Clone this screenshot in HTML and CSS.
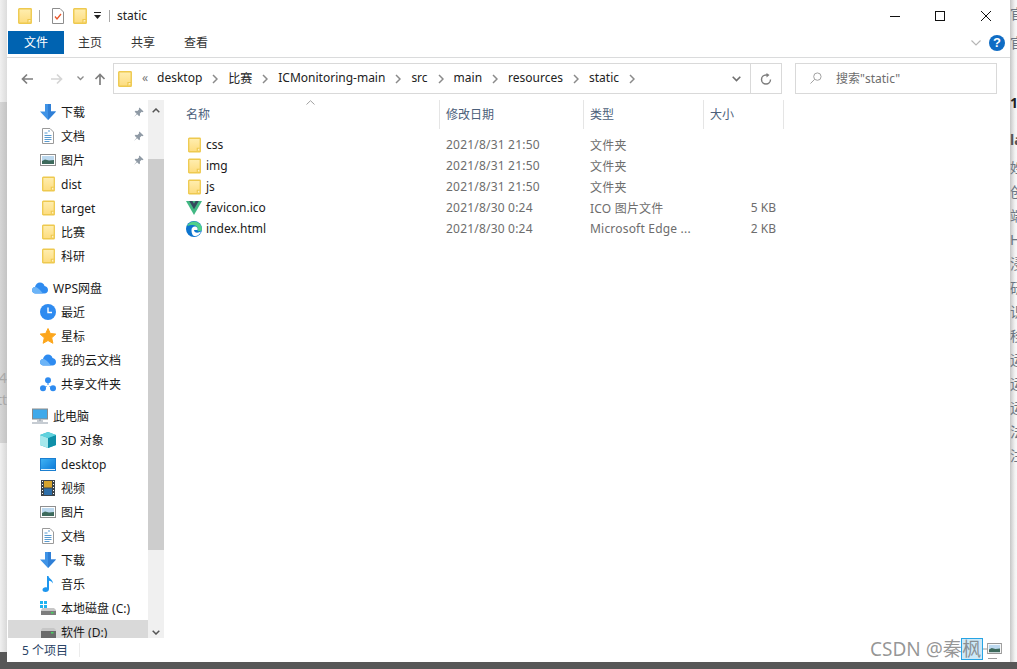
FILE: index.html
```html
<!DOCTYPE html>
<html lang="zh-CN">
<head>
<meta charset="utf-8">
<title>static</title>
<link rel="stylesheet" href="styles.css">
</head>
<body>
<svg class="defs" aria-hidden="true">
  <defs>
    <linearGradient id="gf" x1="0" y1="0" x2="0" y2="1"><stop offset="0" stop-color="#ffeeb0"/><stop offset="1" stop-color="#fddc7e"/></linearGradient>
    <linearGradient id="gvid" x1="0" y1="0" x2="1" y2="1"><stop offset="0" stop-color="#3fb4f5"/><stop offset="1" stop-color="#0a78d7"/></linearGradient>
    <symbol id="folder" viewBox="0 0 14 16"><rect x=".75" y=".75" width="12.5" height="14.5" rx=".6" fill="url(#gf)" stroke="#eec94f" stroke-width="1.4"/><path d="M10 15v-3.5h3" fill="#fff3c8" stroke="#eec94f" stroke-width="1.2"/></symbol>
    <symbol id="down" viewBox="0 0 16 16"><path d="M5 0h6v7.500h5L8 16 0 7.500h5z" fill="#3f93e6"/><path d="M8 0h3v7.500h5L8 16z" fill="#2f7fd6"/></symbol>
    <symbol id="doc" viewBox="0 0 12 16"><path d="M.5.500h7.500l3.500 3.500v11.500H.5z" fill="#fff" stroke="#9a9a9a"/><path d="M2.500 5h3M6 3h2M2.500 7.500h7M2.500 9.500h7M2.500 11.500h7M2.500 13.500h5" stroke="#5a9bd0" fill="none"/></symbol>
    <symbol id="pic" viewBox="0 0 16 12"><rect x=".5" y=".5" width="15" height="11" fill="#fff" stroke="#8f8f8f"/><rect x="2" y="2" width="12" height="8" fill="#bcd8ee"/><path d="M2 7l3-1.500 4 1 5-.5v4H2z" fill="#3d6a5c"/></symbol>
    <symbol id="pin" viewBox="0 0 12 12"><path d="M7 .5l4.500 4.500-1.200.6-.8-.5-2 2 .2 2-1 1-2.200-2.200L1 11l3-3.600L1.800 5.200l1-1 2 .2 2-2-.4-.8z" fill="#8f9aa5"/></symbol>
    <symbol id="cloud" viewBox="0 0 16 12"><path d="M3.500 11.500C1.500 11.500 0 10 0 8.200 0 6.500 1.300 5.200 3 5 3.600 2.500 5.500.5 8 .5c2.300 0 4 1.500 4.500 3.500C14.500 4.300 16 6 16 8c0 2-1.500 3.500-3.500 3.500z" fill="#2e8bf0"/><path d="M3.500 11.500C1.500 11.500 0 10 0 8.200 0 6.500 1.300 5.200 3 5c2 0 3.500 1.500 5 3l3 3.500z" fill="#6cb4f7"/></symbol>
    <symbol id="clock" viewBox="0 0 16 16"><circle cx="8" cy="8" r="8" fill="#2e8bf0"/><path d="M8 3.500V8.500h4" fill="none" stroke="#fff" stroke-width="1.400"/></symbol>
    <symbol id="star" viewBox="0 0 16 16"><path d="M8 .5l2.300 5 5.500.6-4.100 3.700 1.200 5.500L8 12.500l-4.900 2.800 1.200-5.500L.2 6.100l5.500-.6z" fill="#fca61c" stroke="#fca61c" stroke-linejoin="round"/></symbol>
    <symbol id="share" viewBox="0 0 16 16"><circle cx="8" cy="4.200" r="3" fill="#2e8bf0"/><circle cx="3" cy="12.300" r="3" fill="#2e8bf0"/><circle cx="13" cy="12.300" r="3" fill="#2e8bf0"/><path d="M8 6v3M6.500 10.500l-2 1M9.500 10.500l2 1" stroke="#2e8bf0" fill="none"/></symbol>
    <symbol id="pc" viewBox="0 0 16 15"><rect x=".5" y=".5" width="15" height="10" fill="#3fa9ea" stroke="#8b8b8b"/><path d="M5 12.500h6M8 10.500v2M0 14.500h16" stroke="#8d99a6" fill="none"/></symbol>
    <symbol id="cube" viewBox="0 0 16 16"><path d="M8 0l8 3v10l-8 3-8-3V3z" fill="#27b3c6"/><path d="M0 3l8 3v10l-8-3z" fill="#a6e8ec"/><path d="M8 6l8-3v10l-8 3z" fill="#0f8fa8"/><path d="M0 3l8-3 8 3-8 3z" fill="#5fd2dd"/></symbol>
    <symbol id="desk" viewBox="0 0 16 13"><rect x=".5" y=".5" width="15" height="12" fill="url(#gvid)" stroke="#1b7fd0"/><path d="M1 11.500h14" stroke="#dff1fd"/></symbol>
    <symbol id="film" viewBox="0 0 14 16"><rect width="14" height="16" fill="#3d4449"/><rect x="3" y="1" width="8" height="6.500" fill="#d6a42e"/><rect x="3" y="8.500" width="8" height="6.500" fill="#2e6ea8"/><path d="M1 1.500h1M1 4.500h1M1 7.500h1M1 10.500h1M1 13.500h1M12 1.500h1M12 4.500h1M12 7.500h1M12 10.500h1M12 13.500h1" stroke="#fff"/></symbol>
    <symbol id="music" viewBox="0 0 12 16"><path d="M5 0h1.500c.3 2.500 4.500 3.500 4.500 7.500-.8-1.600-2.500-2.500-4-2.700V13c0 1.800-1.500 3-3.500 3C1.800 16 .5 15 .5 13.700c0-1.400 1.500-2.500 3-2.500.6 0 1.100.1 1.500.3z" fill="#1e96ee"/></symbol>
    <symbol id="drive" viewBox="0 0 16 14"><path d="M0 0h3v3H0zM4 0h3v3H4zM0 4h3v3H0zM4 4h3v3H4z" fill="#1eb4f0"/><path d="M1 9l1.500-2H14l2 2v5H1z" fill="#c6c6c6"/><rect x="1" y="10" width="15" height="4" fill="#7d7d7d"/><rect x="11" y="11" width="2.500" height="1.500" fill="#46d160"/></symbol>
    <symbol id="drive2" viewBox="0 0 16 14"><path d="M1 5l1.500-2H14l2 2v9H1z" fill="#c6c6c6"/><rect x="1" y="6" width="15" height="8" fill="#6a6a6a"/><rect x="11" y="7" width="2.500" height="1.500" fill="#46d160"/></symbol>
    <symbol id="vue" viewBox="0 0 16 14"><path d="M0 0h16L8 14z" fill="#41b883"/><path d="M3.200 0h3.200L8 2.800 9.600 0h3.200L8 8.300z" fill="#34495e"/></symbol>
    <symbol id="edge" viewBox="0 0 16 16"><circle cx="8" cy="8" r="8" fill="#0c74cf"/><path d="M1 5C3 1 7 0 10 .7c4 1 6 4.300 6 7.800 0 1.500-2.500 2-4.500 1.500C13 7 10 4 7 4 4.500 4 2.500 4.500 1 5z" fill="#4fd08a"/><path d="M5.500 9c0-2.500 2-4 4-3.500 1.500.4 2.500 1.800 2 3.500H8c0 2 2 3 4.500 2.500l2.500-1c-1 3-4 5-6.500 4.500C6 14.500 5.500 11 5.500 9z" fill="#fff"/></symbol>
    <symbol id="chev" viewBox="0 0 6 10"><path d="M1 1l4 4-4 4" fill="none" stroke="#8a8a8a" stroke-width="1.500"/></symbol>
  </defs>
</svg>

<div class="screen">
  <div class="desk-row">
    <div class="strip-left">
      <div class="sl-top"></div>
      <div class="sl-mid"><span class="sl-a">e4</span><span class="sl-b">tt</span></div>
      <div class="sl-low"></div>
      <div class="sl-dark"></div>
    </div>

    <main class="window">
      <header class="titlebar">
        <svg class="qa-folder"><use href="#folder"/></svg>
        <span class="qa-sep"></span>
        <svg class="qa-check" viewBox="0 0 12 16"><path d="M.5.500h7.500l3.500 3.500v11.500H.5z" fill="#fff" stroke="#8d8d8d"/><path d="M3 8.500l2 2.500 4-5" fill="none" stroke="#e8562a" stroke-width="1.300"/></svg>
        <svg class="qa-folder2"><use href="#folder"/></svg>
        <svg class="qa-drop" viewBox="0 0 7 7"><path d="M0 0h7v1H0zM0 3h7L3.500 7z" fill="#222"/></svg>
        <span class="qa-sep2"></span>
        <span class="title-text">static</span>
        <div class="winctl">
          <svg viewBox="0 0 10 10" class="wc wc-min"><path d="M0 5.500h10" stroke="#111" fill="none"/></svg>
          <svg viewBox="0 0 10 10" class="wc wc-max"><rect x=".5" y=".5" width="9" height="9" fill="none" stroke="#111"/></svg>
          <svg viewBox="0 0 10 10" class="wc wc-close"><path d="M0 0l10 10M10 0L0 10" stroke="#111" fill="none"/></svg>
        </div>
      </header>

      <nav class="ribbon">
        <span class="tab tab-file">文件</span>
        <span class="tab tab-home">主页</span>
        <span class="tab tab-share">共享</span>
        <span class="tab tab-view">查看</span>
        <svg class="rb-chev" viewBox="0 0 10 6"><path d="M.5.500L5 5 9.500.5" fill="none" stroke="#b5b5b5" stroke-width="1.100"/></svg>
        <span class="help">?</span>
      </nav>

      <div class="navrow">
        <svg class="nv nv-back" viewBox="0 0 12 12"><path d="M12 6H1.500M6 1.500L1.500 6 6 10.500" fill="none" stroke="#7f7f7f" stroke-width="1.700"/></svg>
        <svg class="nv nv-fwd" viewBox="0 0 12 12"><path d="M0 6h10.500M6 1.500L10.500 6 6 10.500" fill="none" stroke="#d5d5d5" stroke-width="1.700"/></svg>
        <svg class="nv nv-drop" viewBox="0 0 7 5"><path d="M.5.500L3.500 3.500 6.500.5" fill="none" stroke="#8a8a8a" stroke-width="1.300"/></svg>
        <svg class="nv nv-up" viewBox="0 0 12 12"><path d="M6 12V1.500M1.500 6L6 1.500 10.500 6" fill="none" stroke="#7f7f7f" stroke-width="1.700"/></svg>
        <div class="addr">
          <svg class="ad-folder"><use href="#folder"/></svg>
          <span class="ad-more">«</span>
          <span class="crumb">desktop</span><svg class="cv"><use href="#chev"/></svg>
          <span class="crumb">比赛</span><svg class="cv"><use href="#chev"/></svg>
          <span class="crumb">ICMonitoring-main</span><svg class="cv"><use href="#chev"/></svg>
          <span class="crumb">src</span><svg class="cv"><use href="#chev"/></svg>
          <span class="crumb">main</span><svg class="cv"><use href="#chev"/></svg>
          <span class="crumb">resources</span><svg class="cv"><use href="#chev"/></svg>
          <span class="crumb">static</span><svg class="cv"><use href="#chev"/></svg>
          <span class="ad-fill"></span>
          <svg class="ad-drop" viewBox="0 0 9 6"><path d="M.7.700L4.500 4.500 8.300.7" fill="none" stroke="#6f6f6f" stroke-width="1.600"/></svg>
          <span class="ad-refresh">
            <svg viewBox="0 0 12 12" class="rf"><path d="M10.500 6.500A4.500 4.500 0 1 1 6 2h2" fill="none" stroke="#7c7c7c" stroke-width="1.400"/><path d="M6.500 0l3 2-3 2.500z" fill="#7c7c7c"/></svg>
          </span>
        </div>
        <div class="search">
          <svg class="sr" viewBox="0 0 13 13"><circle cx="8" cy="5" r="4" fill="none" stroke="#9a9a9a"/><path d="M5 8l-4.500 4.500" stroke="#9a9a9a" fill="none"/></svg>
          <span>搜索"static"</span>
        </div>
      </div>

      <div class="content">
        <aside class="pane">
          <div class="tree">
            <div class="it"><svg class="i i16"><use href="#down"/></svg><span>下载</span><svg class="pin"><use href="#pin"/></svg></div>
            <div class="it"><svg class="i i-doc"><use href="#doc"/></svg><span>文档</span><svg class="pin"><use href="#pin"/></svg></div>
            <div class="it"><svg class="i i-pic"><use href="#pic"/></svg><span>图片</span><svg class="pin"><use href="#pin"/></svg></div>
            <div class="it"><svg class="i i-folder"><use href="#folder"/></svg><span>dist</span></div>
            <div class="it"><svg class="i i-folder"><use href="#folder"/></svg><span>target</span></div>
            <div class="it"><svg class="i i-folder"><use href="#folder"/></svg><span>比赛</span></div>
            <div class="it"><svg class="i i-folder"><use href="#folder"/></svg><span>科研</span></div>
            <div class="it top"><svg class="i i-cloud"><use href="#cloud"/></svg><span>WPS网盘</span></div>
            <div class="it"><svg class="i i16"><use href="#clock"/></svg><span>最近</span></div>
            <div class="it"><svg class="i i16"><use href="#star"/></svg><span>星标</span></div>
            <div class="it"><svg class="i i-cloud"><use href="#cloud"/></svg><span>我的云文档</span></div>
            <div class="it"><svg class="i i16"><use href="#share"/></svg><span>共享文件夹</span></div>
            <div class="it top"><svg class="i i16"><use href="#pc"/></svg><span>此电脑</span></div>
            <div class="it"><svg class="i i16"><use href="#cube"/></svg><span>3D 对象</span></div>
            <div class="it"><svg class="i i-desk"><use href="#desk"/></svg><span>desktop</span></div>
            <div class="it"><svg class="i i-film"><use href="#film"/></svg><span>视频</span></div>
            <div class="it"><svg class="i i-pic"><use href="#pic"/></svg><span>图片</span></div>
            <div class="it"><svg class="i i-doc"><use href="#doc"/></svg><span>文档</span></div>
            <div class="it"><svg class="i i16"><use href="#down"/></svg><span>下载</span></div>
            <div class="it"><svg class="i i-music"><use href="#music"/></svg><span>音乐</span></div>
            <div class="it"><svg class="i i-drive"><use href="#drive"/></svg><span>本地磁盘 (C:)</span></div>
            <div class="it sel"><svg class="i i-drive"><use href="#drive2"/></svg><span>软件 (D:)</span></div>
          </div>
          <div class="vscroll">
            <div class="sb-up"><svg viewBox="0 0 8 5" class="sb-ar"><path d="M.7 4.300L4 1l3.300 3.300" fill="none" stroke="#555" stroke-width="1.500"/></svg></div>
            <div class="sb-thumb"></div>
            <div class="sb-down"><svg viewBox="0 0 8 5" class="sb-ar"><path d="M.7.700L4 4l3.300-3.300" fill="none" stroke="#555" stroke-width="1.500"/></svg></div>
          </div>
        </aside>

        <section class="list">
          <div class="thead">
            <div class="th th-name">名称<svg class="sort" viewBox="0 0 9 5"><path d="M.5 4.500L4.500.7l4 3.800" fill="none" stroke="#a0a0a0"/></svg></div>
            <div class="th">修改日期</div>
            <div class="th">类型</div>
            <div class="th">大小</div>
          </div>
          <div class="tr"><div class="td-name"><svg class="fi fi-f"><use href="#folder"/></svg><span>css</span></div><div class="td">2021/8/31 21:50</div><div class="td">文件夹</div><div class="td num"></div></div>
          <div class="tr"><div class="td-name"><svg class="fi fi-f"><use href="#folder"/></svg><span>img</span></div><div class="td">2021/8/31 21:50</div><div class="td">文件夹</div><div class="td num"></div></div>
          <div class="tr"><div class="td-name"><svg class="fi fi-f"><use href="#folder"/></svg><span>js</span></div><div class="td">2021/8/31 21:50</div><div class="td">文件夹</div><div class="td num"></div></div>
          <div class="tr"><div class="td-name"><svg class="fi"><use href="#vue"/></svg><span>favicon.ico</span></div><div class="td">2021/8/30 0:24</div><div class="td">ICO 图片文件</div><div class="td num">5 KB</div></div>
          <div class="tr"><div class="td-name"><svg class="fi"><use href="#edge"/></svg><span>index.html</span></div><div class="td">2021/8/30 0:24</div><div class="td">Microsoft Edge ...</div><div class="td num">2 KB</div></div>
        </section>
      </div>

      <footer class="status"><span class="st-text">5 个项目</span><span class="st-sep"></span></footer>
    </main>

    <div class="strip-right">
      <span class="sr-a">官</span><span class="sr-a sr-a2">官</span>
      <span class="sr-b">1:</span><span class="sr-b sr-b2">la</span>
      <span>姓</span><span>创</span><span>端</span><span>H</span><span>浸</span><span>研</span><span>识</span><span>移</span><span>运</span><span>运</span><span>运</span><span>法</span><span>注</span>
    </div>
  </div>
  <div class="taskbar"></div>

  <div class="watermark"><span>CSDN @秦</span><span class="wm-hi">枫</span>
    <svg class="wm-ic" viewBox="0 0 19 18"><path d="M0 6h4M5 15.500h9" stroke="#9a9a9a" fill="none"/><use href="#pic" x="4" y="0" width="15" height="11"/></svg>
  </div>
</div>
</body>
</html>
```

FILE: styles.css
```css
* { box-sizing: border-box; }
html, body { margin: 0; padding: 0; background: #fff; }
body { font-family: "Noto Sans", "Noto Sans CJK SC", sans-serif; font-size: 12px; color: #1a1a1a; overflow: hidden; }
svg { display: block; flex: none; }
.defs { position: absolute; width: 0; height: 0; }

.screen { position: relative; width: 1017px; height: 669px; display: flex; flex-direction: column; overflow: hidden; }
.desk-row { flex: 1; display: flex; min-height: 0; }
.taskbar { height: 7px; background: #575757; }

.strip-left { width: 7px; display: flex; flex-direction: column; overflow: hidden; }
.sl-top { height: 102px; background: linear-gradient(90deg, #f0f0f0, #dcdcdc); }
.sl-mid { height: 341px; background: linear-gradient(90deg, #d6d6d6, #c4c4c4); display: flex; flex-direction: column; align-items: flex-end; font-size: 14px; color: #a8a8a8; line-height: 22px; padding-top: 265px; white-space: nowrap; }
.sl-low { flex: 1; background: linear-gradient(90deg, #f0f0f0, #d8d8d8); }
.sl-dark { height: 10px; background: #575757; }

.window { flex: 1; min-width: 0; background: #fff; display: flex; flex-direction: column; }

.titlebar { height: 31px; display: flex; align-items: center; position: relative; }
.qa-folder { width: 14px; height: 16px; margin-left: 11px; }
.qa-sep { width: 1px; height: 12px; background: #a8a8a8; margin-left: 7px; }
.qa-check { width: 12px; height: 16px; margin-left: 12px; }
.qa-folder2 { width: 14px; height: 16px; margin-left: 9px; }
.qa-drop { width: 7px; height: 7px; margin-left: 7px; }
.qa-sep2 { width: 1px; height: 12px; background: #a8a8a8; margin-left: 8px; }
.title-text { margin-left: 7px; font-size: 12px; color: #222; }
.winctl { margin-left: auto; display: flex; align-items: center; padding-right: 19px; gap: 35px; }
.wc { width: 10px; height: 10px; }
.wc-close { margin-left: 1px; }

.ribbon { height: 23px; display: flex; align-items: center; margin-left: 1px; }
.tab { color: #333; line-height: 23px; }
.tab-file { width: 56px; height: 23px; background: #0063b1; color: #fff; text-align: center; }
.tab-home { margin-left: 14px; }
.tab-share { margin-left: 29px; }
.tab-view { margin-left: 29px; }
.rb-chev { width: 10px; height: 6px; margin-left: auto; margin-right: 8px; }
.help { width: 16px; height: 16px; border-radius: 50%; background: #0f6cc4; color: #fff; font: bold 13px/16px "Liberation Sans", sans-serif; text-align: center; margin-right: 5px; }

.navrow { margin-top: 3px; border-top: 1px solid #dadbdc; padding-top: 5px; height: 43px; display: flex; align-items: flex-start; }
.nv { margin-top: 10px; }
.nv-back { width: 12px; height: 12px; margin-left: 14px; }
.nv-fwd { width: 12px; height: 12px; margin-left: 18px; }
.nv-drop { width: 7px; height: 5px; margin-left: 14px; margin-top: 13px; }
.nv-up { width: 12px; height: 12px; margin-left: 10px; }
.addr { width: 669px; height: 31px; margin-left: 7px; border: 1px solid #d9d9d9; display: flex; align-items: center; padding-left: 4px; }
.ad-folder { width: 14px; height: 16px; }
.ad-more { margin-left: 10px; color: #777; width: 15px; margin-bottom: 2px; }
.crumb { color: #222; white-space: nowrap; margin-bottom: 2px; }
.cv { width: 6px; height: 10px; margin: 0 10px; }
.ad-fill { flex: 1; }
.ad-drop { width: 9px; height: 6px; margin-right: 9px; }
.ad-refresh { width: 31px; height: 29px; border-left: 1px solid #d9d9d9; display: flex; align-items: center; justify-content: center; }
.rf { width: 12px; height: 12px; }
.search { width: 202px; height: 31px; margin-left: 13px; border: 1px solid #d9d9d9; display: flex; align-items: center; padding: 0 0 2px 14px; color: #6d6d6d; gap: 14px; }
.sr { width: 12px; height: 12px; }

.content { flex: 1; min-height: 0; display: flex; }
.pane { width: 156px; margin-left: 1px; display: flex; overflow: hidden; }
.tree { width: 140px; overflow: hidden; }
.it { height: 24px; display: flex; align-items: center; padding-left: 32px; position: relative; white-space: nowrap; color: #1a1a1a; }
.it > span { position: absolute; left: 53px; }
.it.top { margin-top: 8px; padding-left: 24px; }
.it.top > span { left: 45px; }
.it.sel { background: #d9d9d9; }
.i { width: 16px; height: 16px; }
.i-doc { width: 12px; height: 16px; margin-left: 2px; }
.i-pic { width: 16px; height: 12px; }
.i-folder { width: 13px; height: 16px; margin-left: 2px; }
.i-cloud { width: 16px; height: 12px; }
.i-desk { width: 16px; height: 13px; }
.i-film { width: 14px; height: 16px; margin-left: 1px; }
.i-music { width: 12px; height: 16px; margin-left: 2px; }
.i-drive { width: 16px; height: 14px; }
.it .pin { position: absolute; left: 125px; top: 7px; width: 11px; height: 11px; }

.vscroll { width: 16px; display: flex; flex-direction: column; background: #f0f0f0; }
.sb-up { height: 59px; padding-top: 8px; display: flex; justify-content: center; }
.sb-ar { width: 8px; height: 5px; }
.sb-thumb { height: 391px; background: #cdcdcd; }
.sb-down { flex: 1; display: flex; justify-content: center; align-items: flex-end; padding-bottom: 3px; }

.list { flex: 1; min-width: 0; padding-left: 15px; }
.thead, .tr { display: grid; grid-template-columns: 261px 144px 120px 80px; }
.thead { height: 28px; margin-bottom: 6px; }
.th { padding-left: 6px; border-right: 1px solid #e5e5e5; color: #4c607a; line-height: 29px; position: relative; }
.th-name { padding-left: 7px; }
.sort { position: absolute; left: 127px; top: 0; width: 9px; height: 5px; }
.tr { height: 21px; align-items: center; }
.td-name { display: flex; align-items: center; padding-left: 7px; color: #1a1a1a; }
.fi { width: 16px; height: 16px; margin-right: 4px; }
.fi-f { width: 13px; height: 16px; margin-left: 2px; margin-right: 5px; }
.td { padding-left: 6px; color: #6d6d6d; white-space: nowrap; overflow: hidden; letter-spacing: .2px; }
.td.num { text-align: right; padding-right: 8px; letter-spacing: 0; }

.status { height: 24px; display: flex; align-items: center; padding-left: 15px; color: #2a4365; background: #fff; }
.st-sep { width: 1px; height: 14px; background: #ececec; margin-left: 11px; }

.strip-right { width: 7px; overflow: hidden; display: flex; flex-direction: column; background: linear-gradient(90deg, #c6c6c6, #f2f2f2 70%, #f8f8f8); font-size: 14px; line-height: 24px; color: #6b7683; white-space: nowrap; padding-top: 156px; position: relative; }
.sr-a { position: absolute; left: 0; top: 2px; }
.sr-a2 { top: 31px; }
.sr-b { position: absolute; left: 0; top: 91px; font-weight: bold; color: #222; }
.sr-b2 { top: 128px; color: #555; }

.watermark { position: absolute; left: 870px; top: 637px; height: 24px; display: flex; align-items: center; font-size: 19px; line-height: 24px; color: rgba(110,110,110,.72); white-space: nowrap; }
.wm-hi { width: 22px; height: 22px; border: 1px solid #26a4e4; background: #cde8f7; display: flex; align-items: center; justify-content: center; margin-left: -1px; }
.wm-ic { width: 19px; height: 18px; margin-left: 0; margin-top: 6px; }
```
